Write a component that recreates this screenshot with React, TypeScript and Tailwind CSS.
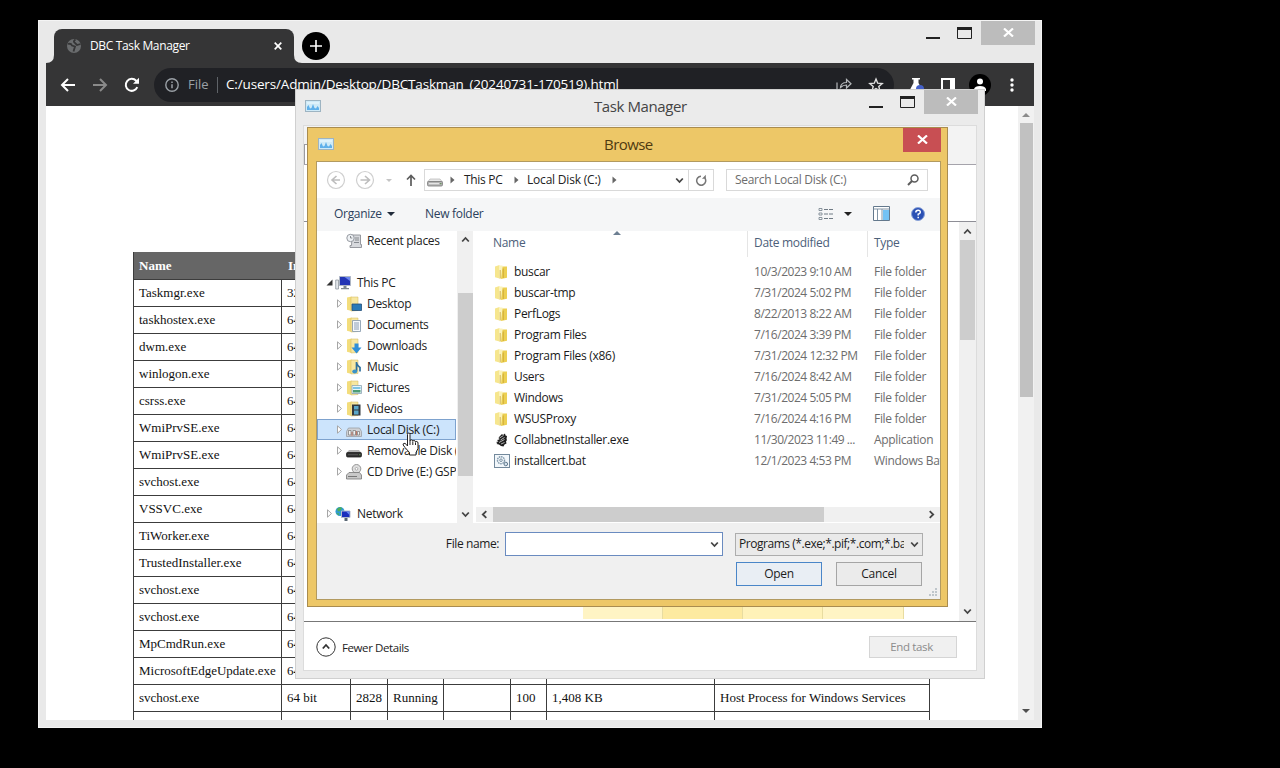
import { clsx } from 'clsx';
import type { ReactNode } from 'react';

const UI = "font-['Open_Sans','Noto_Sans',sans-serif]";

/* ---------- data ---------- */

interface ProcessRow {
  name: string;
  type: string;
  pid?: string;
  status?: string;
  cpu?: string;
  memory?: string;
  description?: string;
}

const processes: ProcessRow[] = [
  { name: 'Taskmgr.exe', type: '32 bit' },
  { name: 'taskhostex.exe', type: '64 bit' },
  { name: 'dwm.exe', type: '64 bit' },
  { name: 'winlogon.exe', type: '64 bit' },
  { name: 'csrss.exe', type: '64 bit' },
  { name: 'WmiPrvSE.exe', type: '64 bit' },
  { name: 'WmiPrvSE.exe', type: '64 bit' },
  { name: 'svchost.exe', type: '64 bit' },
  { name: 'VSSVC.exe', type: '64 bit' },
  { name: 'TiWorker.exe', type: '64 bit' },
  { name: 'TrustedInstaller.exe', type: '64 bit' },
  { name: 'svchost.exe', type: '64 bit' },
  { name: 'svchost.exe', type: '64 bit' },
  { name: 'MpCmdRun.exe', type: '64 bit' },
  { name: 'MicrosoftEdgeUpdate.exe', type: '64 bit' },
  {
    name: 'svchost.exe',
    type: '64 bit',
    pid: '2828',
    status: 'Running',
    cpu: '100',
    memory: '1,408 KB',
    description: 'Host Process for Windows Services',
  },
  { name: '', type: '' },
];

type FileKind = 'folder' | 'exe' | 'bat';

interface FileRow {
  name: string;
  date: string;
  type: string;
  kind: FileKind;
}

const files: FileRow[] = [
  { name: 'buscar', date: '10/3/2023 9:10 AM', type: 'File folder', kind: 'folder' },
  { name: 'buscar-tmp', date: '7/31/2024 5:02 PM', type: 'File folder', kind: 'folder' },
  { name: 'PerfLogs', date: '8/22/2013 8:22 AM', type: 'File folder', kind: 'folder' },
  { name: 'Program Files', date: '7/16/2024 3:39 PM', type: 'File folder', kind: 'folder' },
  { name: 'Program Files (x86)', date: '7/31/2024 12:32 PM', type: 'File folder', kind: 'folder' },
  { name: 'Users', date: '7/16/2024 8:42 AM', type: 'File folder', kind: 'folder' },
  { name: 'Windows', date: '7/31/2024 5:05 PM', type: 'File folder', kind: 'folder' },
  { name: 'WSUSProxy', date: '7/16/2024 4:16 PM', type: 'File folder', kind: 'folder' },
  { name: 'CollabnetInstaller.exe', date: '11/30/2023 11:49 ...', type: 'Application', kind: 'exe' },
  { name: 'installcert.bat', date: '12/1/2023 4:53 PM', type: 'Windows Batch', kind: 'bat' },
];

/* ---------- icons ---------- */

function Chevron({ dir, className }: { dir: 'up' | 'down' | 'left' | 'right'; className?: string }) {
  const d = {
    up: 'M1.2 6.5 4.5 3l3.3 3.5',
    down: 'M1.2 2.5 4.5 6l3.3-3.5',
    left: 'M6.3 1.2 2.8 4.5l3.5 3.3',
    right: 'M2.7 1.2 6.2 4.5 2.7 7.8',
  }[dir];
  return (
    <svg viewBox="0 0 9 9" className={clsx('h-[9px] w-[9px] shrink-0', className)}>
      <path d={d} fill="none" stroke="#444" strokeWidth="1.8" />
    </svg>
  );
}

function CrumbArrow() {
  return (
    <svg viewBox="0 0 5 8" className="h-2 w-[5px] shrink-0">
      <path d="M.5.5 4.5 4 .5 7.5z" fill="#666" />
    </svg>
  );
}

function MonitorIcon() {
  return (
    <svg viewBox="0 0 16 12" className="h-3 w-4 shrink-0">
      <rect x=".5" y=".5" width="15" height="11" fill="#cfeaf7" stroke="#9db4c2" />
      <path d="M2 10V7l1.500-2L5 8.500 6.500 8 8 4l1.500 4 1.500.500L12.500 6 14 8v2z" fill="#5fb0ea" />
      <path d="M2 3h12" stroke="#eefaff" />
    </svg>
  );
}

function FolderIcon() {
  return (
    <svg viewBox="0 0 16 16" className="h-4 w-4 shrink-0">
      <path d="M1 2.500 5.500 1v13.500L1 13.200z" fill="#f6e68e" />
      <path d="M5 1.500h3.500V14l-3.500.7z" fill="#fbf3ba" />
      <path d="M8.500 2.500h4.500v11.300L7 15z" fill="#ecd052" />
      <path d="M6.200 6v8.500M9.300 4.500V14" stroke="#c9a437" strokeWidth=".8" />
    </svg>
  );
}

function DriveIcon({ dark }: { dark?: boolean }) {
  return (
    <svg viewBox="0 0 16 16" className="h-4 w-4 shrink-0">
      <path d="M3 7h10l2.500 3H.5z" fill={dark ? '#b5b5b5' : '#e8e8e8'} stroke={dark ? 'none' : '#aaa'} strokeWidth=".6" />
      <rect x=".5" y="9.500" width="15" height="4.500" rx="1.200" fill={dark ? '#2f2f2f' : '#b5b5b5'} stroke={dark ? '#222' : '#777'} strokeWidth=".8" />
      <path d="M2 11.700h10" stroke={dark ? '#555' : '#f0f0f0'} />
      <path d="M13 11.700h1.500" stroke="#5c8a4e" />
    </svg>
  );
}

function SystemDriveIcon() {
  return (
    <svg viewBox="0 0 16 16" className="h-4 w-4 shrink-0">
      <path d="M2.500 6h11l2 3.500v5H.5v-5z" fill="#cfd2d6" stroke="#9a9ea4" strokeWidth=".8" />
      <path d="M2.500 8.500h2.500v4.500H2.500zM7 8.500h2.500v4.500H7zM11.500 9.500h2v3.500h-2z" fill="#f3f3f3" stroke="#777" strokeWidth=".7" />
      <path d="M6 10v4M10.400 9v4.500" stroke="#b5563f" strokeWidth=".8" />
    </svg>
  );
}

function CdIcon() {
  return (
    <svg viewBox="0 0 16 16" className="h-4 w-4 shrink-0">
      <circle cx="10.500" cy="4.800" r="4.300" fill="#dedede" stroke="#8c8c8c" strokeWidth=".9" />
      <circle cx="10.500" cy="4.800" r="1.300" fill="#fff" stroke="#888" strokeWidth=".6" />
      <path d="M3 8.500h10.500l2 2.500v4H.5v-4z" fill="#c9c9c9" stroke="#777" strokeWidth=".8" />
      <path d="M2 12.500h9" stroke="#777" />
    </svg>
  );
}

function PcIcon() {
  return (
    <svg viewBox="0 0 16 16" className="h-4 w-4 shrink-0">
      <path d="M.7 5h2.800v9H.7z" fill="#e4e8ec" stroke="#8f979e" strokeWidth=".8" />
      <path d="M4.500 1.500h11v9h-11z" fill="#2335b5" stroke="#aeb6c4" />
      <path d="M9.500 2H15v4z" fill="#6b86ee" />
      <path d="M8.500 11h3v2h2.500v1.200H6V13h2.500z" fill="#7d8790" />
    </svg>
  );
}

function NetworkIcon() {
  return (
    <svg viewBox="0 0 16 16" className="h-4 w-4 shrink-0">
      <circle cx="5" cy="5.500" r="4.500" fill="#2f9bd0" />
      <path d="M2 3q3-3 5-1l-2 3-2 .500zM1 7l3 .500v2z" fill="#4fae55" />
      <path d="M6.500 5h8.500v6.500H6.500z" fill="#1b2fbd" stroke="#b3bccb" />
      <path d="M9.500 12h3v3h-3z" fill="#596673" />
      <path d="M11 5.500h3.500V9z" fill="#6a8bf2" />
    </svg>
  );
}

function RecentIcon() {
  return (
    <svg viewBox="0 0 16 16" className="h-4 w-4 shrink-0">
      <path d="M6 2h8.500v9.500h1v3H4v-2h1.500z" fill="#d7d9dd" stroke="#8d9095" strokeWidth=".9" />
      <circle cx="4.500" cy="5" r="3.700" fill="#eef1f4" stroke="#8b9097" strokeWidth=".9" />
      <path d="M4.500 3v2h1.800M9 5h4M9 7h4M8 9.500h5" fill="none" stroke="#7d8187" strokeWidth=".9" />
    </svg>
  );
}

function LibraryIcon({ children }: { children: ReactNode }) {
  return (
    <svg viewBox="0 0 16 16" className="h-4 w-4 shrink-0">
      <path d="M1 1.500 5.500.500v14.500L1 13.700z" fill="#f3dd7c" />
      <path d="M5 1h7V14.500l-7 .500z" fill="#f7e7a0" stroke="#d3b75a" strokeWidth=".5" />
      {children}
    </svg>
  );
}

function BatIcon() {
  return (
    <svg viewBox="0 0 16 14" className="h-[14px] w-4 shrink-0">
      <rect x=".5" y=".5" width="15" height="13" fill="#f2f7fb" stroke="#73899c" />
      <circle cx="7" cy="6.200" r="3.500" fill="none" stroke="#7d95a8" strokeWidth="1.400" strokeDasharray="1.600 .7" />
      <circle cx="7" cy="6.200" r="1.300" fill="none" stroke="#60798d" strokeWidth=".8" />
      <circle cx="11.800" cy="10" r="1.800" fill="#d6e3ee" stroke="#60798d" />
    </svg>
  );
}

function ExeIcon() {
  return (
    <svg viewBox="0 0 16 16" className="h-4 w-4 shrink-0">
      <path d="M5.500 4.500 8 2l1 1 2-1.500.500 2L13 4l-.5 3 .5 1-1 1.500.5 2-2 1-1 2-2.500-.5-2-1.500-2.500-.5 1-1-1.500-1 2.500-.5-1.500-1.500 2.500-.5-1-1.500z" fill="#1d1d1d" />
      <path d="M5.500 6l4-2.500M6.500 8l4-2.500M5 10.500l5.500-3M7 12l3.500-1.500" stroke="#ddd" strokeWidth=".8" />
    </svg>
  );
}

function FileIcon({ kind }: { kind: FileKind }) {
  if (kind === 'exe') return <ExeIcon />;
  if (kind === 'bat') return <BatIcon />;
  return <FolderIcon />;
}

/* ---------- window chrome ---------- */

function CloseGlyph() {
  return (
    <svg viewBox="0 0 11 9" className="h-[9px] w-[11px]">
      <path d="M1 .5 10 8.500M10 .5 1 8.500" stroke="#fff" strokeWidth="2.200" />
    </svg>
  );
}

function CaptionButtons() {
  return (
    <div className="mr-[-1px] flex items-start">
      <svg viewBox="0 0 48 24" className="h-6 w-12">
        <path d="M0 17h14" stroke="#222" strokeWidth="2" />
        <path d="M31.500 7v10.500h14V7" fill="none" stroke="#222" />
        <path d="M31 7.500h15" stroke="#222" strokeWidth="3" />
      </svg>
      <div className="ml-[7px] flex h-6 w-[54px] items-center justify-center bg-[#bcbcbc] pb-px">
        <CloseGlyph />
      </div>
    </div>
  );
}

/* ---------- browser ---------- */

function BrowserToolbar() {
  return (
    <div className="flex h-[43px] items-center bg-[#353536] pl-[14px]">
      <svg viewBox="0 0 16 14" className="h-[14px] w-4">
        <path d="M8 1 2 7l6 6M2 7h13" fill="none" stroke="#fff" strokeWidth="2" />
      </svg>
      <svg viewBox="0 0 16 14" className="ml-4 h-[14px] w-4">
        <path d="m8 1 6 6-6 6M14 7H1" fill="none" stroke="#8a8a8a" strokeWidth="2" />
      </svg>
      <svg viewBox="0 0 16 16" className="ml-4 h-4 w-4">
        <path d="M13.300 10.200A6 6 0 1 1 12.200 3.800L14 5.500" fill="none" stroke="#fff" strokeWidth="2" />
        <path d="M15 .8v6H9z" fill="#fff" />
      </svg>
      <div className="ml-[14px] flex h-[34px] w-[740px] items-center rounded-full bg-[#202125] pl-[11px] text-[13.5px] text-white">
        <svg viewBox="0 0 14 14" className="h-[14px] w-[14px]">
          <circle cx="7" cy="7" r="6.200" fill="none" stroke="#9aa0a6" strokeWidth="1.400" />
          <path d="M7 6.300v4M7 3.500v1.500" stroke="#9aa0a6" strokeWidth="1.500" />
        </svg>
        <span className="ml-[9px] w-[21px] text-[13px] text-[#9aa0a6]">File</span>
        <span className="mx-[8px] h-4 w-px bg-[#5f6368]" />
        <span className="tracking-[-0.16px] whitespace-nowrap">C:/users/Admin/Desktop/DBCTaskman_(20240731-170519).html</span>
        <svg viewBox="0 0 16 14" className="ml-auto h-[14px] w-4">
          <path d="M1 4.500V13h11v-2M4.500 9.500Q5 4.500 10.500 4.500V1.500L15 5.800 10.500 10V7Q7 7 4.500 9.500z" fill="none" stroke="#b5b8bb" strokeWidth="1.200" />
        </svg>
        <svg viewBox="0 0 16 16" className="mr-[10px] ml-4 h-4 w-4">
          <path d="m8 2 1.700 4.200 4.500.4-3.400 2.900 1.100 4.400L8 11.500l-3.900 2.400 1.100-4.400L1.800 6.600l4.500-.4z" fill="none" stroke="#e0e0e0" strokeWidth="1.400" />
        </svg>
      </div>
      <svg viewBox="0 0 16 16" className="ml-[14px] h-4 w-4">
        <path d="M4 1h8v1.500h-1.500V6L15 14.500H1L5.500 6V2.500H4z" fill="#fff" />
        <circle cx="12" cy="12" r="4" fill="#4460c8" />
      </svg>
      <svg viewBox="0 0 14 14" className="ml-[17px] h-[14px] w-[14px]">
        <path d="M1 1h12v12H1z" fill="none" stroke="#fff" strokeWidth="2" />
        <path d="M9 1h4v12H9z" fill="#fff" />
      </svg>
      <svg viewBox="0 0 22 22" className="ml-[14px] h-[22px] w-[22px]">
        <circle cx="11" cy="11" r="11" fill="#000" />
        <circle cx="11" cy="7.500" r="3" fill="#fff" />
        <path d="M5 17v-2q1-3 6-3t6 3v2z" fill="#fff" />
      </svg>
      <svg viewBox="0 0 4 14" className="ml-[19px] h-[14px] w-1">
        <circle cx="2" cy="2" r="1.700" fill="#fff" />
        <circle cx="2" cy="7" r="1.700" fill="#fff" />
        <circle cx="2" cy="12" r="1.700" fill="#fff" />
      </svg>
    </div>
  );
}

const processGrid =
  'grid grid-cols-[148px_69px_37px_56px_67px_36px_168px_215px] border-b border-[#3c3c3c]';

function ProcessTable() {
  return (
    <div className="ml-[87px] w-[797px] border-l border-[#3c3c3c] font-['Liberation_Serif',serif] text-[13px] leading-[26px] whitespace-nowrap text-[#111]">
      <div className={clsx(processGrid, 'h-[28px] bg-[#666] font-bold text-white')}>
        <span className="overflow-hidden pl-[5px] leading-[27px]">Name</span>
        <span className="overflow-hidden pl-[6px] leading-[27px]">Image</span>
      </div>
      {processes.map((p, i) => (
        <div key={i} className={clsx(processGrid, 'h-[27px]')}>
          {[p.name, p.type, p.pid, p.status, '', p.cpu, p.memory, p.description].map((cell, c) => (
            <span key={c} className="border-r border-[#3c3c3c] pl-[5px]">
              {cell}
            </span>
          ))}
        </div>
      ))}
    </div>
  );
}

function BrowserWindow() {
  return (
    <div className="absolute top-5 left-[38px] flex h-[708px] w-[1004px] flex-col border border-[#f4f4f4] bg-[#e9e9e9] px-[7px] pb-[7px]">
      <div className="flex h-[42px] shrink-0 items-start">
        <svg viewBox="0 0 8 8" className="h-2 w-2 self-end">
          <path d="M8 0v8H0q8 0 8-8z" fill="#353536" />
        </svg>
        <div className="mt-2 flex h-[34px] w-[240px] items-center rounded-t-lg bg-[#353536] px-3 text-[12px] text-white">
          <svg viewBox="0 0 16 16" className="h-4 w-4">
            <circle cx="8" cy="8" r="7" fill="#6a6c6e" />
            <path d="M2 6q3-1 4 1.500l3 1-1.500 5M9.500 1.500Q6.500 3.500 9 5l2 2 3.500-1" fill="none" stroke="#353536" strokeWidth="1.800" />
          </svg>
          <span className="ml-2 tracking-[-0.35px]">DBC Task Manager</span>
          <svg viewBox="0 0 8 8" className="ml-auto h-2 w-2">
            <path d="m.7.7 6.600 6.600M7.300.7.7 7.300" stroke="#fff" strokeWidth="1.700" />
          </svg>
        </div>
        <svg viewBox="0 0 8 8" className="h-2 w-2 self-end">
          <path d="M0 0v8h8Q0 8 0 0z" fill="#353536" />
        </svg>
        <div className="mt-[11px] flex h-7 w-7 items-center justify-center rounded-full bg-black">
          <svg viewBox="0 0 12 12" className="h-3 w-3">
            <path d="M6 0v12M0 6h12" stroke="#fff" strokeWidth="1.600" />
          </svg>
        </div>
        <div className="ml-auto">
          <CaptionButtons />
        </div>
      </div>
      <BrowserToolbar />
      <div className="flex min-h-0 flex-1 bg-white">
        <div className="min-w-0 flex-1 overflow-hidden pt-[146px]">
          <ProcessTable />
        </div>
        <div className="flex w-[16px] flex-col items-center bg-[#f1f1f1]">
          <svg viewBox="0 0 8 4" className="mt-[7px] h-1 w-2">
            <path d="M0 4 4 0l4 4z" fill="#8b8b8b" />
          </svg>
          <div className="mt-[6px] h-[274px] w-[13px] bg-[#c1c1c1]" />
          <svg viewBox="0 0 8 4" className="mt-auto mb-[7px] h-1 w-2">
            <path d="M0 0h8L4 4z" fill="#505050" />
          </svg>
        </div>
      </div>
    </div>
  );
}

/* ---------- task manager ---------- */

function TaskManagerWindow() {
  return (
    <div className="absolute top-[89px] left-[295px] flex h-[590px] w-[690px] flex-col border border-[#d0d0d0] bg-[#ebebeb] px-[7px] pb-[7px]">
      <div className="flex h-[35px] shrink-0 items-start">
        <div className="mt-[10px] ml-[2px]">
          <MonitorIcon />
        </div>
        <div className="ml-[273px] pt-[5px] text-[15px] leading-[22px] tracking-[-0.4px] text-[#444]">Task Manager</div>
        <div className="ml-auto">
          <CaptionButtons />
        </div>
      </div>
      <div className="flex min-h-0 flex-1 flex-col border border-[#dcdcdc] bg-white">
        <div className="flex h-[39px] shrink-0 items-end border-b border-[#a5a3ab] bg-[#f3f3f3]">
          <div className="h-[20px] w-[60px] border-t border-l border-[#9a9aa0] bg-white" />
        </div>
        <div className="h-[57px] shrink-0 border-b border-[#8e8e96]" />
        <div className="flex min-h-0 flex-1">
          <div className="flex flex-1 items-end pb-[2px] pl-[279px]">
            <div className="h-[20px] w-20 border-r border-[#e8dca0] bg-[#fff4c4]" />
            <div className="h-[20px] w-20 border-r border-[#e8dca0] bg-[#fdeaa0]" />
            <div className="h-[20px] w-20 border-r border-[#e8dca0] bg-[#fff2b8]" />
            <div className="h-[20px] w-[81px] border-r border-[#e8dca0] bg-[#fff4c4]" />
          </div>
          <div className="flex w-[17px] flex-col items-center bg-[#f0f0f0] pt-[5px] pb-[5px]">
            <Chevron dir="up" />
            <div className="mt-[4px] h-[100px] w-[15px] bg-[#cdcdcd]" />
            <Chevron dir="down" className="mt-auto" />
          </div>
        </div>
        <div className="flex h-[49px] shrink-0 items-center border-t border-[#777] pt-[2px] pr-[19px] pl-[12px] text-[11.5px]">
          <svg viewBox="0 0 20 20" className="h-5 w-5">
            <circle cx="10" cy="10" r="9.200" fill="none" stroke="#333" />
            <path d="m6.800 11.500 3.200-3.500 3.200 3.500" fill="none" stroke="#333" strokeWidth="1.800" />
          </svg>
          <span className="ml-[6px] pt-px tracking-[-0.4px] text-[#222]">Fewer Details</span>
          <div className="ml-auto flex h-[22px] w-[88px] items-center justify-center border border-[#d5d5d5] bg-[#f0f0f0] pr-[3px] tracking-[-0.35px] text-[#8c8c8c]">
            End task
          </div>
        </div>
      </div>
    </div>
  );
}

/* ---------- browse dialog ---------- */

interface NavItemProps {
  icon: ReactNode;
  label: string;
  root?: boolean;
  open?: boolean;
  leaf?: boolean;
  selected?: boolean;
}

function NavItem({ icon, label, root, open, leaf, selected }: NavItemProps) {
  return (
    <div
      className={clsx(
        'flex h-[21px] shrink-0 items-center border',
        selected ? 'border-[#7da2ce] bg-[#cce4fc]' : 'border-transparent',
        root ? 'pl-2' : 'pl-[18px]'
      )}
    >
      <svg viewBox="0 0 8 9" className={clsx('h-[9px] w-2 shrink-0', leaf && 'invisible')}>
        {open ? (
          <path d="M6.500 1.500v6h-6z" fill="#333" />
        ) : (
          <path d="M1.500.8 5.500 4.500l-4 3.700z" fill="#fff" stroke="#a6a6a6" />
        )}
      </svg>
      <span className={root ? 'ml-px' : 'ml-[2px]'}>{icon}</span>
      <span className={root ? 'ml-[6px]' : 'ml-[5px]'}>{label}</span>
    </div>
  );
}

function NavPane() {
  return (
    <div className="flex w-[139px] shrink-0 flex-col overflow-hidden text-[#222]">
      <div className="mt-[-1px] h-[21px] shrink-0">
        <NavItem leaf icon={<RecentIcon />} label="Recent places" />
      </div>
      <div className="h-[21px] shrink-0" />
      <NavItem root open icon={<PcIcon />} label="This PC" />
      <NavItem
        icon={<LibraryIcon><path d="M6 8h9.500v6.500H6z" fill="#2a7ab8" stroke="#234f78" strokeWidth=".8" /></LibraryIcon>}
        label="Desktop"
      />
      <NavItem
        icon={
          <LibraryIcon>
            <path d="M6.500 3.500h8v11h-8z" fill="#f6f9fc" stroke="#8094a8" strokeWidth=".8" />
            <path d="M8 6h5M8 8h5M8 10h5M8 12h5" stroke="#7289a3" strokeWidth=".8" />
          </LibraryIcon>
        }
        label="Documents"
      />
      <NavItem
        icon={<LibraryIcon><path d="M8.500 5.500h4v4h3L10.500 15.500l-5-6h3z" fill="#2f8fd8" /></LibraryIcon>}
        label="Downloads"
      />
      <NavItem
        icon={
          <LibraryIcon>
            <path d="M10.500 3v9M10.500 4q1 3 3.500 4.500v4" fill="none" stroke="#2d6f9e" strokeWidth="1.700" />
            <ellipse cx="8.700" cy="12.500" rx="2.500" ry="2" fill="#3b93c8" />
          </LibraryIcon>
        }
        label="Music"
      />
      <NavItem
        icon={
          <LibraryIcon>
            <path d="M6 5.500h9.500v8H6z" fill="#e8f6fa" stroke="#8da5b2" strokeWidth=".8" />
            <path d="M7 10h7.500v2.500H7z" fill="#4d9d74" />
            <path d="M7 7h7.500v2H7z" fill="#7cc4e4" />
          </LibraryIcon>
        }
        label="Pictures"
      />
      <NavItem
        icon={
          <LibraryIcon>
            <path d="M6 3.500h8.500v11H6z" fill="#33383d" />
            <path d="M8 5h4.500v3.500H8zM8 9.500h4.500v4H8z" fill="#5aa7c9" />
          </LibraryIcon>
        }
        label="Videos"
      />
      <NavItem selected icon={<SystemDriveIcon />} label="Local Disk (C:)" />
      <NavItem icon={<DriveIcon dark />} label="Removable Disk (D:)" />
      <NavItem icon={<CdIcon />} label="CD Drive (E:) GSP1RMCPRXFREO" />
      <div className="h-[21px] shrink-0" />
      <NavItem root icon={<NetworkIcon />} label="Network" />
    </div>
  );
}

function FileList() {
  return (
    <div className="flex min-w-0 flex-1 flex-col overflow-hidden">
      <div className="relative flex h-[26px] shrink-0 items-start text-[#4c607a]">
        <svg viewBox="0 0 8 4" className="absolute top-0 left-[137px] h-1 w-2">
          <path d="M0 4 4 0l4 4z" fill="#6d7f92" />
        </svg>
        <span className="w-[271px] pt-1 pl-[17px]">Name</span>
        <span className="h-[26px] w-[120px] border-l border-[#e5e5e5] pt-1 pl-[6px]">Date modified</span>
        <span className="h-[26px] border-l border-[#e5e5e5] pt-1 pl-[6px]">Type</span>
      </div>
      <div className="min-h-0 flex-1 pt-1">
        {files.map((f) => (
          <div key={f.name} className="flex h-[21px] items-center text-[#6d6d6d]">
            <div className="flex w-[278px] shrink-0 items-center pl-[18px] text-[#1a1a1a]">
              <span className="flex w-4 shrink-0">
                <FileIcon kind={f.kind} />
              </span>
              <span className="ml-1">{f.name}</span>
            </div>
            <span className="w-[120px] shrink-0 tracking-[-0.45px]">{f.date}</span>
            <span className="shrink-0">{f.type}</span>
          </div>
        ))}
      </div>
      <div className="mb-px flex h-[15px] shrink-0 items-center bg-[#f0f0f0] pr-1 pl-[4px]">
        <Chevron dir="left" />
        <div className="ml-[4px] h-[15px] w-[331px] bg-[#cdcdcd]" />
        <Chevron dir="right" className="ml-auto" />
      </div>
    </div>
  );
}

function AddressBar() {
  return (
    <div className="flex h-[36px] shrink-0 items-center pl-[9px]">
      {['M11.500 5 7 9l4.500 4M7 9h8', 'M10.500 5 15 9l-4.500 4M15 9H6'].map((d, i) => (
        <svg key={d} viewBox="0 0 20 20" className={clsx('h-5 w-5', i === 0 && 'mr-[9px]')}>
          <circle cx="10" cy="10" r="8.500" fill="#fff" stroke="#cfcfcf" strokeWidth="1.200" />
          <path d={d} transform={i === 0 ? 'translate(-1 1)' : 'translate(-.5 1)'} fill="none" stroke="#bdbdbd" strokeWidth="1.600" />
        </svg>
      ))}
      <svg viewBox="0 0 6 3" className="ml-[11px] h-[3px] w-[6px]">
        <path d="M0 0h6L3 3z" fill="#c4c4c4" />
      </svg>
      <svg viewBox="0 0 10 12" className="ml-[14px] h-3 w-[10px]">
        <path d="M5 12V1.500M1 5.500l4-4 4 4" fill="none" stroke="#5c5c5c" strokeWidth="1.700" />
      </svg>
      <div className="ml-2 flex h-[22px] w-[290px] items-center border border-[#d9d9d9] pl-[2px] text-[#222]">
        <DriveIcon />
        <span className="ml-[7px]"><CrumbArrow /></span>
        <span className="ml-[9px] w-[42px] whitespace-nowrap">This PC</span>
        <span className="ml-[8px]"><CrumbArrow /></span>
        <span className="ml-[8px] w-[77px] tracking-[-0.2px] whitespace-nowrap">Local Disk (C:)</span>
        <span className="ml-[8px]"><CrumbArrow /></span>
        <Chevron dir="down" className="mr-[4px] ml-auto" />
        <div className="flex h-full w-[25px] items-center justify-center border-l border-[#d9d9d9]">
          <svg viewBox="0 0 12 12" className="h-3 w-3">
            <path d="M9.800 4A4.500 4.500 0 1 1 6 2.200" fill="none" stroke="#777" strokeWidth="1.500" />
            <path d="M10.800.8v4H7z" fill="#777" />
          </svg>
        </div>
      </div>
      <div className="ml-[12px] flex h-[22px] w-[202px] items-center border border-[#d9d9d9] pr-[8px] pl-[8px] text-[#6d6d6d]">
        Search Local Disk (C:)
        <svg viewBox="0 0 12 12" className="ml-auto h-3 w-3">
          <circle cx="7.500" cy="4.500" r="3.500" fill="none" stroke="#5c5c5c" strokeWidth="1.500" />
          <path d="M5 7 1 11" stroke="#5c5c5c" strokeWidth="2" />
        </svg>
      </div>
    </div>
  );
}

function CommandBar() {
  return (
    <div className="flex h-[33px] shrink-0 items-center bg-[#f5f6f7] pb-[2px] pl-[17px] text-[#2b3f5c]">
      <span className="w-[48px]">Organize</span>
      <svg viewBox="0 0 8 4" className="ml-[5px] h-1 w-2">
        <path d="M0 0h8L4 4z" fill="#222c3b" />
      </svg>
      <span className="ml-[30px] tracking-[-0.3px]">New folder</span>
      <svg viewBox="0 0 16 14" className="ml-auto h-[14px] w-4">
        <path d="M1 1.500h3v2H1zM1 6h3v2H1zM1 10.500h3v2H1z" fill="#fff" stroke="#7f8a94" strokeWidth=".9" />
        <path d="M6 2.500h4M11 2.500h4M6 7h4M11 7h4M6 11.500h4M11 11.500h4" stroke="#6f7a84" />
      </svg>
      <svg viewBox="0 0 8 4" className="ml-[10px] h-1 w-2">
        <path d="M0 0h8L4 4z" fill="#222" />
      </svg>
      <svg viewBox="0 0 17 15" className="ml-[21px] h-[15px] w-[17px]">
        <path d="M.5.5h16v14H.5z" fill="#fff" stroke="#63788c" />
        <path d="M.5 3h16M4.500 3v11M9 3v11" stroke="#8294a5" />
        <path d="M10 4h6v10h-6z" fill="#74c2f4" />
      </svg>
      <svg viewBox="0 0 14 14" className="mr-[15px] ml-[21px] h-[14px] w-[14px]">
        <circle cx="7" cy="7" r="6.500" fill="#2a50b4" stroke="#8ba3d8" />
        <path d="M4.800 5.500q0-2.300 2.300-2.300t2.200 2Q9.300 6.500 7.200 7.300v1.200M7.200 9.700v1.500" fill="none" stroke="#fff" strokeWidth="1.500" />
      </svg>
    </div>
  );
}

function BrowseDialog() {
  return (
    <div className="absolute top-[127px] left-[307px] flex h-[480px] w-[641px] flex-col border border-[#a98c4f] bg-[#edc767] pr-[6px] pb-[6px] pl-[8px]">
      <div className="flex h-[33px] shrink-0 items-start">
        <div className="mt-[10px] ml-[2px]">
          <MonitorIcon />
        </div>
        <div className="ml-[270px] pt-[5px] text-[15px] leading-[22px] tracking-[-0.55px] text-[#4f3a10]">Browse</div>
        <div className="ml-auto flex h-6 w-[38px] items-center justify-center bg-[#c84f53] pb-px">
          <CloseGlyph />
        </div>
      </div>
      <div className="flex min-h-0 flex-1 flex-col border border-[#b29a60] bg-white text-[12px] leading-4 tracking-[-0.3px] whitespace-nowrap">
        <AddressBar />
        <CommandBar />
        <div className="flex h-[292px] shrink-0">
          <NavPane />
          <div className="mr-[3px] ml-px flex w-[16px] shrink-0 flex-col items-center bg-[#f0f0f0] pt-[4px] pb-[4px]">
            <Chevron dir="up" />
            <div className="mt-[49px] h-[183px] w-[15px] bg-[#cdcdcd]" />
            <Chevron dir="down" className="mt-auto" />
          </div>
          <FileList />
        </div>
        <div className="flex min-h-0 flex-1 flex-col items-end bg-[#f0f0f0] pt-[9px] pr-[17px] text-[#1c1c1c]">
          <div className="flex items-center">
            <span className="mr-[6px] tracking-[-0.4px]">File name:</span>
            <div className="mr-[12px] flex h-6 w-[218px] items-center justify-end border border-[#6a8bc0] bg-white pr-[3px]">
              <Chevron dir="down" />
            </div>
            <div className="flex h-[23px] w-[188px] items-center border border-[#adadad] bg-[#eaeaea] pr-[3px] pl-[3px]">
              <span className="w-[165px] overflow-hidden tracking-[-0.46px]">Programs (*.exe;*.pif;*.com;*.bat;*.cmd)</span>
              <Chevron dir="down" className="ml-auto" />
            </div>
          </div>
          <div className="mt-[6px] mr-px flex gap-[14px]">
            <div className="flex h-6 w-[86px] items-center justify-center border border-[#4a86c8] bg-[#e9eef4]">Open</div>
            <div className="flex h-6 w-[86px] items-center justify-center border border-[#a5a5a5] bg-[#ebebeb]">Cancel</div>
          </div>
          <svg viewBox="0 0 9 9" className="mt-[2px] mr-[-15px] h-[9px] w-[9px] shrink-0">
            <path d="M6 0h2v2H6zM6 3h2v2H6zM6 6h2v2H6zM3 3h2v2H3zM3 6h2v2H3zM0 6h2v2H0z" fill="#bfc6cb" />
          </svg>
        </div>
      </div>
    </div>
  );
}

function HandCursor() {
  return (
    <svg viewBox="0 0 18 24" className="absolute top-[432px] left-[402px] h-6 w-[18px]">
      <path
        d="M5.500 14V2.500q0-1.500 1.300-1.500T8 2.500V9q.3-1.200 1.400-1.200T10.800 9.200q.4-1 1.400-.8t1.300 1.600q.4-.7 1.400-.5T16 11v5.500l-2 4V23H7.500v-2.500L3 15.500 1.200 13q-.5-1.300.8-1.600t2 .8z"
        fill="#fff"
        stroke="#222"
      />
      <path d="M8 9v4M10.800 9.500V13M13.500 10.500V13" stroke="#222" />
    </svg>
  );
}

export default function App() {
  return (
    <div className={clsx('relative h-[768px] w-[1280px] overflow-hidden bg-black', UI)}>
      <BrowserWindow />
      <TaskManagerWindow />
      <BrowseDialog />
      <HandCursor />
    </div>
  );
}
